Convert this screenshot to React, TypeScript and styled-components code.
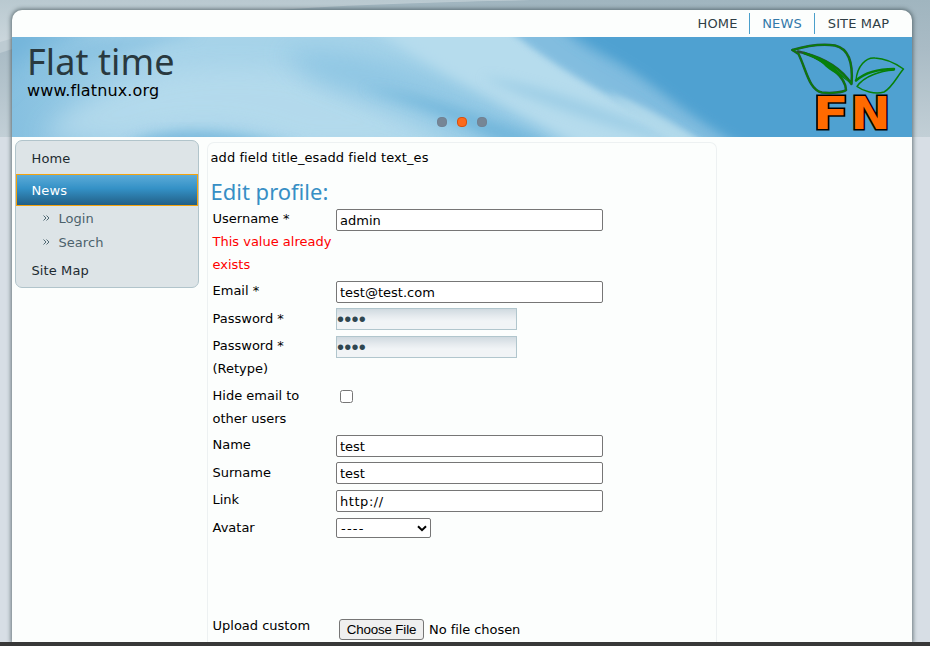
import React from "react";
import styled, { createGlobalStyle } from "styled-components";

const Global = createGlobalStyle`
  * { box-sizing: border-box; }
  body { margin: 0; background: #d7dee5; overflow: hidden; }
  body, input, select { font-family: "DejaVu Sans", Verdana, sans-serif; font-size: 13px; }
`;

const Screen = styled.div`
  position: relative;
  width: 930px;
  height: 646px;
  overflow: hidden;
  display: flex;
  flex-direction: column;
  background: #d7dee5;
`;

const Backdrop = styled.svg`
  position: absolute;
  inset: 0;
`;

const Sheet = styled.div`
  position: relative;
  width: 900px;
  height: 632px;
  margin: 10px 0 0 12px;
  border-radius: 10px 10px 0 0;
  background: #fcfefd;
  box-shadow: 0 0 4px 1px rgba(60, 76, 80, 0.72);
  flex: none;
`;

const BottomBar = styled.div`
  position: relative;
  height: 4px;
  background: #383838;
`;

const TopNav = styled.nav`
  height: 27px;
  display: flex;
  justify-content: flex-end;
  padding: 3px 10px 0 0;
`;

const TopLink = styled.a<{ $active?: boolean; $width: number }>`
  width: ${(p) => p.$width}px;
  height: 21px;
  line-height: 21px;
  text-align: center;
  white-space: nowrap;
  letter-spacing: 0.15px;
  color: ${(p) => (p.$active ? "#3279a9" : "#2f3e45")};
  & + & { border-left: 1px solid #4a9fcb; }
`;

const Banner = styled.header`
  position: relative;
  height: 100px;
  display: flex;
  justify-content: space-between;
`;

const BannerArt = styled.svg`
  position: absolute;
  inset: 0;
`;

const Brand = styled.div`
  position: relative;
  padding: 6px 0 0 15px;
`;

const SiteName = styled.h1`
  margin: 0;
  font: 400 36px/38px "Noto Sans", sans-serif;
  color: #29393f;
  letter-spacing: 0.1px;
  white-space: nowrap;
`;

const SiteUrl = styled.div`
  font-size: 16px;
  line-height: 19px;
  letter-spacing: 0.14px;
  color: #000;
`;

const Logo = styled.svg`
  position: relative;
  overflow: visible;
`;

const Dots = styled.div`
  position: absolute;
  left: 425px;
  top: 80px;
  display: flex;
  gap: 10px;
`;

const Dot = styled.span<{ $active?: boolean }>`
  width: 10px;
  height: 10px;
  border-radius: 4px;
  background: ${(p) => (p.$active ? "#fd6a1c" : "#768696")};
  border: 1px solid ${(p) => (p.$active ? "#d8510f" : "#718294")};
`;

const Columns = styled.div`
  display: flex;
  gap: 8px;
  padding: 3px 0 0 3px;
`;

const Menu = styled.nav`
  width: 184px;
  height: 148px;
  border: 1px solid #b1c4cb;
  border-radius: 7px;
  background: #dde4e7;
`;

const MenuItem = styled.a<{ $active?: boolean; $line?: number }>`
  display: block;
  height: ${(p) => (p.$active ? 32 : 33)}px;
  line-height: ${(p) => p.$line ?? 35}px;
  padding-left: ${(p) => (p.$active ? 14.5 : 15.5)}px;
  letter-spacing: 0.1px;
  color: ${(p) => (p.$active ? "#fff" : "#1c2a30")};
  ${(p) =>
    p.$active &&
    `border: 1px solid #f5a30c;
     background: linear-gradient(#5cabd8, #3491c6 45%, #225f86);`}
`;

const SubItem = styled.a`
  display: flex;
  align-items: center;
  height: 24px;
  padding-left: 27px;
  gap: 8.5px;
  color: #4c626c;
  letter-spacing: 0.05px;
  svg { margin-top: -1px; }
`;

const Content = styled.main`
  width: 510px;
  height: 500px;
  margin-top: 2px;
  border: 1px solid #edf1f2;
  border-bottom: 0;
  border-radius: 7px 7px 0 0;
  padding: 3px 0 0 2.5px;
`;

const Notice = styled.div`
  line-height: 23px;
  letter-spacing: 0.08px;
  white-space: nowrap;
`;

const Heading = styled.h2`
  margin: 7px 0 0;
  height: 31px;
  font: 400 22px/31px "Noto Sans", sans-serif;
  letter-spacing: 0;
  color: #378fc5;
`;

const Row = styled.div<{ $height: number }>`
  display: grid;
  grid-template-columns: 123.5px 1fr;
  height: ${(p) => p.$height}px;
  padding-left: 2px;
`;

const Label = styled.div`
  line-height: 23px;
  letter-spacing: 0;
  color: #000;
  white-space: nowrap;
`;

const ErrorText = styled.div`
  color: #f00;
`;

const Field = styled.div<{ $top: number }>`
  padding-top: ${(p) => p.$top}px;
  display: flex;
  align-items: flex-start;
`;

const TextInput = styled.input<{ $spacing?: number }>`
  width: 267px;
  height: 22px;
  padding: 1px 3px;
  border: 1px solid #767676;
  border-radius: 2px;
  background: #fff;
  color: #000;
  outline: 0;
  letter-spacing: ${(p) => p.$spacing ?? 0}px;
`;

const PasswordInput = styled.input`
  width: 181px;
  height: 22px;
  padding: 1px 0 0;
  border: 1px solid #b1c6cd;
  border-radius: 0;
  background: linear-gradient(#d0dae0, #e5eaee 35%, #f1f4f6 60%);
  color: #2f4650;
  outline: 0;
  font: 20px "Liberation Sans", Arial, sans-serif;
  letter-spacing: 0.25px;
`;

const Check = styled.input`
  width: 13px;
  height: 13px;
  margin: 0 0 0 4px;
`;

const Select = styled.div`
  width: 95px;
  height: 20px;
  display: flex;
  align-items: center;
  justify-content: space-between;
  padding: 0 3px 0 4px;
  letter-spacing: 1.2px;
  border: 1px solid #767676;
  border-radius: 2px;
  background: #fff;
  color: #000;
`;

const FileButton = styled.button`
  width: 85px;
  height: 21px;
  margin-left: 3px;
  padding: 0;
  border: 1px solid #767676;
  border-radius: 3px;
  background: #efefef;
  color: #000;
  font: 13.333px "Liberation Sans", Arial, sans-serif;
  letter-spacing: -0.15px;
  white-space: nowrap;
`;

const FileName = styled.span`
  margin-left: 5px;
  line-height: 22px;
  letter-spacing: -0.06px;
  white-space: nowrap;
`;

const DoubleChevron = () => (
  <svg width="7" height="6" viewBox="0 0 7 6" fill="none" stroke="#4f6873">
    <path d="M.5 .5l2.500 2.500-2.500 2.500M3.500 .5l2.500 2.500-2.500 2.500" />
  </svg>
);

const PageBackdrop = () => (
  <Backdrop width="930" height="137" viewBox="0 0 930 137">
    <defs>
      <linearGradient id="pageBase" x1="0" y1="0" x2="0" y2="1">
        <stop offset="0" stopColor="#a0b5bf" />
        <stop offset=".35" stopColor="#a9bbc5" />
        <stop offset="1" stopColor="#c2cfd6" />
      </linearGradient>
      <linearGradient id="pageSwoosh" x1="0" y1="0" x2="0" y2="1">
        <stop offset="0" stopColor="#b9c9d0" />
        <stop offset="1" stopColor="#cbd6dc" />
      </linearGradient>
    </defs>
    <path d="M0 0H930V137H0z" fill="url(#pageBase)" />
    <path d="M0 0H530C330 4 120 13 0 53z" fill="#bdcbd2" />
    <path d="M0 0H530C300 4 90 15 0 42z" fill="url(#pageSwoosh)" />
  </Backdrop>
);

const BannerPicture = () => (
  <BannerArt width="900" height="100" viewBox="0 0 900 100">
    <defs>
      <linearGradient id="sky" x1="0" x2="1">
        <stop offset="0" stopColor="#86c0e0" />
        <stop offset=".17" stopColor="#a7d3e9" />
        <stop offset=".5" stopColor="#a5d3e9" />
        <stop offset=".7" stopColor="#8ac2e1" />
        <stop offset="1" stopColor="#4b9fd0" />
      </linearGradient>
      <filter id="soft3" x="-30%" y="-50%" width="160%" height="200%">
        <feGaussianBlur stdDeviation="3" />
      </filter>
      <filter id="soft6" x="-30%" y="-50%" width="160%" height="200%">
        <feGaussianBlur stdDeviation="6" />
      </filter>
      <filter id="soft12" x="-30%" y="-50%" width="160%" height="200%">
        <feGaussianBlur stdDeviation="12" />
      </filter>
    </defs>
    <path d="M0 0H900V100H0z" fill="url(#sky)" />
    <path d="M30 100C80 40 180 22 280 34C360 55 400 85 440 110H290C240 88 170 80 110 105z" fill="#b6dbed" opacity=".85" filter="url(#soft12)" />
    <path d="M-20 55C0 15 50 -5 100 -15H-20z" fill="#72b4da" filter="url(#soft12)" />
    <path d="M20 30C60 5 110 -4 190 -4C150 8 80 20 20 45z" fill="#86c0e0" opacity=".6" filter="url(#soft6)" />
    <path d="M270 15C340 8 400 30 460 55C500 72 530 90 560 112H470C420 80 350 64 300 42z" fill="#8cc5e3" opacity=".85" filter="url(#soft12)" />
    <path d="M350 50C400 58 440 68 480 84C510 93 530 100 545 112H500C450 84 400 66 350 50z" fill="#68b0d8" opacity=".7" filter="url(#soft6)" />
    <path d="M355 -12H498C540 24 610 64 705 112H570C510 76 430 38 355 -12z" fill="#b6dced" filter="url(#soft6)" />
    <path d="M470 40C520 46 570 65 625 85C650 94 660 99 670 108C600 92 520 64 470 40z" fill="#84bfdf" opacity=".5" filter="url(#soft6)" />
    <path d="M496 -8H555C600 22 670 75 740 112H705C640 80 560 44 496 -8z" fill="#80bcdf" opacity=".9" filter="url(#soft3)" />
    <path d="M546 -12H920V115H745C690 92 650 52 600 24C575 10 560 2 546 -12z" fill="#4fa1d1" filter="url(#soft6)" />
    <path d="M595 55C635 68 665 88 696 108H665C640 92 620 76 595 55z" fill="#b3daeb" opacity=".85" filter="url(#soft3)" />
    <path d="M110 112C135 92 190 86 290 110z" fill="#6fb4da" opacity=".8" filter="url(#soft6)" />
  </BannerArt>
);

const LeafLogo = () => (
  <Logo width="124" height="100" viewBox="0 0 124 100">
    <g fill="none" strokeLinejoin="round" strokeLinecap="round">
      <g stroke="#294e35" strokeWidth="2.5">
        <path d="M4.500 13C18 9 34 6.500 47 8.500C62 12 65 29 63.500 47C53 31 35 21 16 16" />
        <path d="M4.500 13L10.500 17C18 32 21 53 34 55.500C43 56.500 55 55.500 58 53C58 42 42 25 16 16L10 14.500" />
      </g>
      <g stroke="#078009" strokeWidth="1.500">
        <path d="M4.500 13C18 9 34 6.500 47 8.500C62 12 65 29 63.500 47C53 31 35 21 16 16" />
        <path d="M4.500 13L10.500 17C18 32 21 53 34 55.500C43 56.500 55 55.500 58 53C58 42 42 25 16 16" />
        <path d="M68 43.500C69 29 78 20 87 21C98 21.500 107 26 115.500 32C110 38 104 51 96 55C87 58 75 54 69 49.500C76 39 92 34 106 33" />
        <path d="M68 43.500C79 34 94 32 106 32" strokeWidth="2.500" />
      </g>
      <path d="M16 16C33 20 43 27 48 32C55 38 60 44 63 47C53 38 42 35 35 27C29 22 21 19 16 16z" fill="#078009" />
    </g>
    <g
      fill="#ff6a00"
      stroke="#000"
      strokeWidth="2.800"
      paintOrder="stroke"
      fontFamily="DejaVu Sans, Verdana, sans-serif"
      fontWeight="700"
      fontSize="44"
    >
      <text x="25" y="92" textLength="36" lengthAdjust="spacingAndGlyphs">F</text>
      <text x="62.500" y="92" textLength="40" lengthAdjust="spacingAndGlyphs">N</text>
    </g>
  </Logo>
);

type Item = {
  label: React.ReactNode;
  height: number;
  top: number;
  field: React.ReactNode;
};

const items: Item[] = [
  {
    label: (<>Username *<ErrorText>This value already<br />exists</ErrorText></>),
    height: 72, top: 2, field: <TextInput defaultValue="admin" />,
  },
  { label: "Email *", height: 28, top: 2, field: <TextInput defaultValue="test@test.com" /> },
  { label: "Password *", height: 27, top: 1, field: <PasswordInput type="password" defaultValue="test" /> },
  { label: (<>Password *<br />(Retype)</>), height: 50, top: 2, field: <PasswordInput type="password" defaultValue="test" /> },
  { label: (<>Hide email to<br />other users</>), height: 49, top: 6, field: <Check type="checkbox" /> },
  { label: "Name", height: 28, top: 2, field: <TextInput defaultValue="test" /> },
  { label: "Surname", height: 27, top: 1, field: <TextInput defaultValue="test" /> },
  { label: "Link", height: 28, top: 2, field: <TextInput $spacing={0.55} defaultValue="http://" /> },
  {
    label: "Avatar", height: 98, top: 2,
    field: (
      <Select>
        ----
        <svg width="10" height="7" viewBox="0 0 10 7" fill="none" stroke="#000" strokeWidth="2">
          <path d="M1 1.200l4 4 4-4" />
        </svg>
      </Select>
    ),
  },
  {
    label: "Upload custom", height: 30, top: 5,
    field: (<><FileButton>Choose File</FileButton><FileName>No file chosen</FileName></>),
  },
];

export default function App() {
  return (
    <Screen>
      <Global />
      <PageBackdrop />
      <Sheet>
        <TopNav>
          <TopLink $width={63}>HOME</TopLink>
          <TopLink $width={65} $active>NEWS</TopLink>
          <TopLink $width={88}>SITE MAP</TopLink>
        </TopNav>
        <Banner>
          <BannerPicture />
          <Brand>
            <SiteName>Flat time</SiteName>
            <SiteUrl>www.flatnux.org</SiteUrl>
          </Brand>
          <LeafLogo />
          <Dots><Dot /><Dot $active /><Dot /></Dots>
        </Banner>
        <Columns>
          <Menu>
            <MenuItem>Home</MenuItem>
            <MenuItem $active $line={32}>News</MenuItem>
            <SubItem><DoubleChevron />Login</SubItem>
            <SubItem><DoubleChevron />Search</SubItem>
            <MenuItem $line={33}>Site Map</MenuItem>
          </Menu>
          <Content>
            <Notice>add field title_esadd field text_es</Notice>
            <Heading>Edit profile:</Heading>
            {items.map((item, i) => (
              <Row key={i} $height={item.height}>
                <Label>{item.label}</Label>
                <Field $top={item.top}>{item.field}</Field>
              </Row>
            ))}
          </Content>
        </Columns>
      </Sheet>
      <BottomBar />
    </Screen>
  );
}
